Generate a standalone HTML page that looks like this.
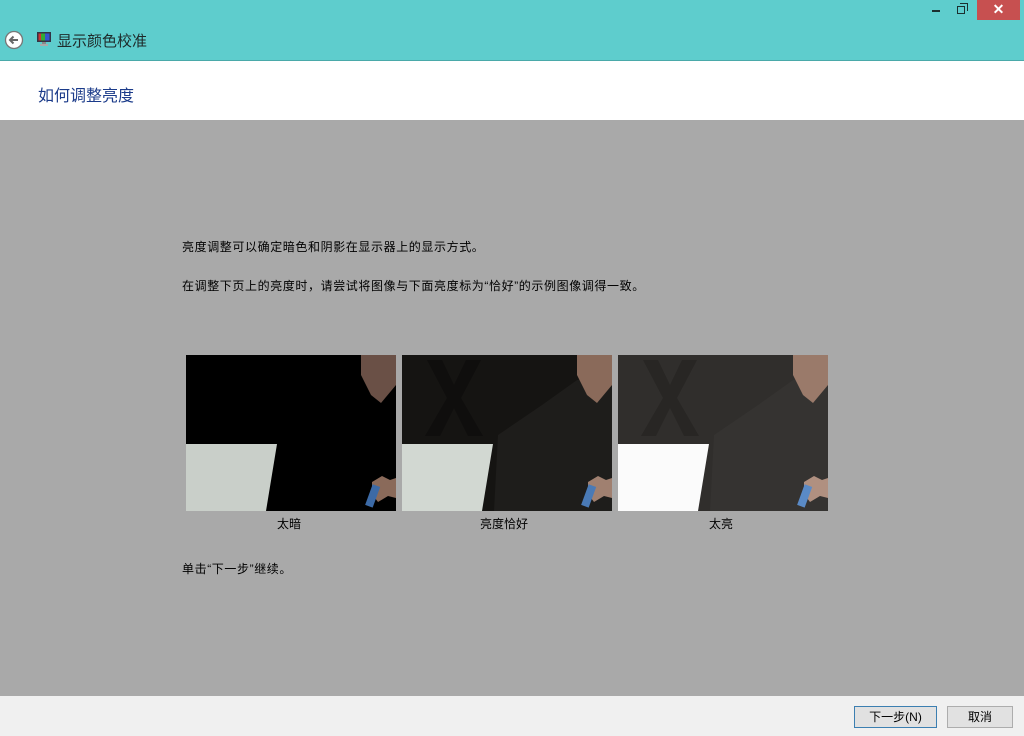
<!DOCTYPE html>
<html><head><meta charset="utf-8"><style>
*{margin:0;padding:0;box-sizing:border-box}
body{width:1024px;height:736px;overflow:hidden;font-family:"Liberation Sans","Microsoft YaHei","Noto Sans CJK SC",sans-serif;background:#a9a9a9;position:relative;font-size:12px;color:#000}
.t{position:absolute;white-space:nowrap}
.p{letter-spacing:0.6px}
#tb{position:absolute;left:0;top:0;width:1024px;height:61px;background:#5ecdcd;border-bottom:1px solid #4aa9a9}
#hd{position:absolute;left:0;top:61px;width:1024px;height:59px;background:#fff}
#ft{position:absolute;left:0;top:696px;width:1024px;height:40px;background:#f0f0f0}
.btn{position:absolute;top:706px;height:22px;border:1px solid #adadad;background:#e1e1e1;font-size:12px;text-align:center;line-height:20px}
</style></head><body>
<div id="tb"></div>
<div id="hd"></div>
<div id="ft"></div>
<svg class="t" style="left:4px;top:30px" width="20" height="20" viewBox="0 0 20 20"><circle cx="10" cy="10" r="8.5" fill="#fff" stroke="#777" stroke-width="1.3"/><path d="M14 10H6M9.5 6.5L6 10l3.5 3.5" fill="none" stroke="#666" stroke-width="2"/></svg>
<svg class="t" style="left:36px;top:31px" width="16" height="16" viewBox="0 0 16 16"><rect x="1" y="1" width="14" height="10" fill="#334"/><rect x="2.5" y="2.5" width="11" height="7" fill="#c33"/><rect x="5" y="2.5" width="4" height="7" fill="#3a3"/><rect x="9" y="2.5" width="4.5" height="7" fill="#35c"/><rect x="6" y="11" width="4" height="2" fill="#888"/><rect x="4" y="13" width="8" height="2" fill="#aaa"/></svg>
<div class="t" style="left:57px;top:30px;font-size:15px;color:#1e2a2a">显示颜色校准</div>
<div class="t" style="left:932px;top:10px;width:8px;height:2px;background:#1b2f2f"></div>
<div class="t" style="left:957px;top:6px;width:8px;height:8px;border:1.5px solid #1b2f2f"></div>
<div class="t" style="left:960px;top:3px;width:8px;height:8px;border-top:1.5px solid #1b2f2f;border-right:1.5px solid #1b2f2f"></div>
<div class="t" style="left:977px;top:0;width:43px;height:20px;background:#c75050;color:#fff;font-size:14px;text-align:center;line-height:18px;font-weight:bold">✕</div>
<div class="t" style="left:38px;top:82px;font-size:16px;color:#1b3b8a">如何调整亮度</div>
<div class="t p" style="left:182px;top:238px">亮度调整可以确定暗色和阴影在显示器上的显示方式。</div>
<div class="t p" style="left:182px;top:277px">在调整下页上的亮度时，请尝试将图像与下面亮度标为“恰好”的示例图像调得一致。</div>
<svg class="t" style="left:186px;top:355px" width="210" height="156" viewBox="0 0 210 156">
<rect width="210" height="156" fill="#000"/>
<path d="M0 89H91L80 156H0Z" fill="#c9cfc9"/>
<path d="M175 0H210V30L195 48L185 40L175 20Z" fill="#6a5046"/>
<path d="M186 127l10-6 8 4 6-2v20l-8-2-10 6-6-8z" fill="#8a6a5a"/><rect x="183" y="130" width="8" height="22" fill="#3c6aa6" transform="rotate(20 187 140)"/>
</svg>
<svg class="t" style="left:402px;top:355px" width="210" height="156" viewBox="0 0 210 156">
<rect width="210" height="156" fill="#151412"/>
<path d="M25 5h15l12 25 12-25h15l-20 38 22 38h-15l-14-28-14 28h-15l22-38z" fill="#0f0e0d"/>
<path d="M0 89H91L80 156H0Z" fill="#d2d8d2"/>
<path d="M92 156L96 80L140 50L175 25L210 20V156Z" fill="#1e1d1b"/>
<path d="M175 0H210V30L195 48L185 40L175 20Z" fill="#8a6a5a"/>
<path d="M186 127l10-6 8 4 6-2v20l-8-2-10 6-6-8z" fill="#a08070"/><rect x="183" y="130" width="8" height="22" fill="#4a7ab6" transform="rotate(20 187 140)"/>
</svg>
<svg class="t" style="left:618px;top:355px" width="210" height="156" viewBox="0 0 210 156">
<rect width="210" height="156" fill="#302e2c"/>
<path d="M25 5h15l12 25 12-25h15l-20 38 22 38h-15l-14-28-14 28h-15l22-38z" fill="#282624"/>
<path d="M0 89H91L80 156H0Z" fill="#fbfbfb"/>
<path d="M92 156L96 80L140 50L175 25L210 20V156Z" fill="#353331"/>
<path d="M175 0H210V30L195 48L185 40L175 20Z" fill="#9a7a6a"/>
<path d="M186 127l10-6 8 4 6-2v20l-8-2-10 6-6-8z" fill="#b09080"/><rect x="183" y="130" width="8" height="22" fill="#5a8ac6" transform="rotate(20 187 140)"/>
</svg>
<div class="t" style="left:277px;top:515px">太暗</div>
<div class="t" style="left:480px;top:515px">亮度恰好</div>
<div class="t" style="left:709px;top:515px">太亮</div>
<div class="t p" style="left:182px;top:560px">单击“下一步”继续。</div>
<div class="btn" style="left:854px;width:83px;border-color:#3c7fb1">下一步(N)</div>
<div class="btn" style="left:947px;width:66px">取消</div>
</body></html>
